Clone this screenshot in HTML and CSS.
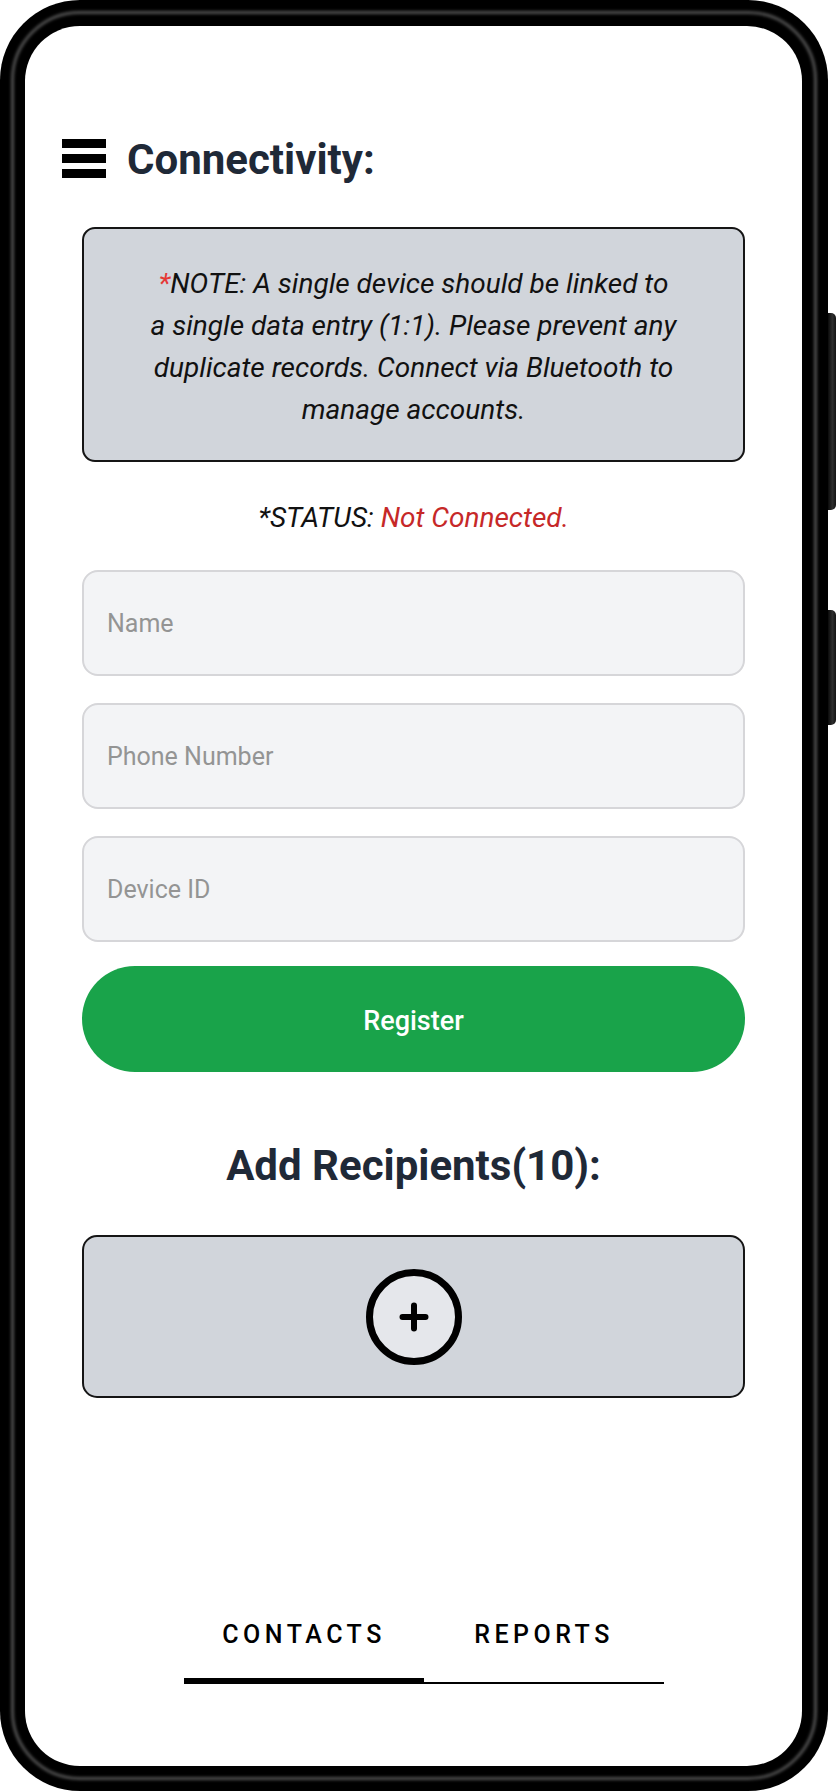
FILE: index.html
```html
<!DOCTYPE html>
<html lang="en">
<head>
<meta charset="utf-8">
<title>Connectivity</title>
<link rel="stylesheet" href="styles.css">
</head>
<body>
<div class="device">
  <div class="frame">
    <div class="screen">
      <header class="header">
        <div class="burger"><span></span><span></span><span></span></div>
        <h1 class="title">Connectivity:</h1>
      </header>
      <main class="content">
        <div class="note">
          <p><span class="req">*</span>NOTE: A single device should be linked to<br>a single data entry (1:1). Please prevent any<br>duplicate records. Connect via Bluetooth to<br>manage accounts.</p>
        </div>
        <p class="status">*STATUS: <span class="bad">Not Connected.</span></p>
        <div class="field"><input type="text" placeholder="Name"></div>
        <div class="field"><input type="text" placeholder="Phone Number"></div>
        <div class="field"><input type="text" placeholder="Device ID"></div>
        <button class="register" type="button">Register</button>
        <h2 class="subtitle">Add Recipients(10):</h2>
        <div class="recipients">
          <div class="add-circle">
            <svg width="32" height="32" viewBox="0 0 32 32"><path d="M16 4.5V27.5M4.5 16H27.5" stroke="#000" stroke-width="6" stroke-linecap="round" fill="none"/></svg>
          </div>
        </div>
      </main>
      <nav class="tabs">
        <div class="tab active">CONTACTS</div>
        <div class="tab">REPORTS</div>
      </nav>
    </div>
  </div>
  <div class="side">
    <div class="sbtn sbtn-long"></div>
    <div class="sbtn sbtn-short"></div>
  </div>
</div>
</body>
</html>
```

FILE: styles.css
```css
* { box-sizing: border-box; }
html, body { margin: 0; padding: 0; background: #ffffff; }
body { font-family: Roboto, "Noto Sans", "Liberation Sans", sans-serif; }

.device { display: flex; align-items: flex-start; width: 838px; height: 1792px; }

.frame {
  position: relative;
  width: 828px;
  height: 1791px;
  background: #000;
  border-radius: 80px;
  padding: 26px 26px 25px 25px;
}
.frame::before {
  content: "";
  position: absolute;
  inset: 11px;
  border-radius: 69px;
  border: 3px solid #505050;
  filter: blur(1.6px);
}

.side { display: flex; flex-direction: column; padding-top: 313px; gap: 100px; }
.sbtn {
  width: 8px;
  border-radius: 0 5px 5px 0;
  background: linear-gradient(90deg, #0a0a0a, #2e2e2e 55%, #141414);
}
.sbtn-long { height: 197px; }
.sbtn-short { height: 115px; }

.screen {
  position: relative;
  height: 100%;
  background: #fff;
  border-radius: 55px;
  display: flex;
  flex-direction: column;
  overflow: hidden;
}

.header {
  display: flex;
  align-items: center;
  gap: 21px;
  padding: 111px 37px 0;
}
.burger { display: flex; flex-direction: column; gap: 6px; width: 44px; }
.burger span { display: block; height: 9px; background: #000; }
.title {
  margin: 0;
  padding-top: 3px;
  font-size: 42px;
  line-height: 39px;
  font-weight: 700;
  color: #1f2937;
}

.content { padding: 0 57px; display: flex; flex-direction: column; }

.note {
  margin-top: 48px;
  height: 235px;
  background: #d1d5db;
  border: 2px solid #151515;
  border-radius: 13px;
  display: flex;
  align-items: center;
  justify-content: center;
}
.note p {
  margin: 0;
  padding-top: 4px;
  font-style: italic;
  font-size: 28px;
  line-height: 42px;
  text-align: center;
  color: #111;
}
.req { color: #e53935; }

.status {
  margin: 41px 0 0;
  font-style: italic;
  font-size: 28px;
  line-height: 30px;
  text-align: center;
  color: #111;
}
.bad { color: #c62828; }

.field { margin-top: 27px; }
.status + .field { margin-top: 37px; }
.field input {
  display: block;
  width: 100%;
  height: 106px;
  border: 2px solid #d6d6d9;
  border-radius: 16px;
  background: #f3f4f6;
  padding: 0 23px;
  font-family: inherit;
  font-size: 25px;
  color: #222;
  outline: none;
}
.field input::placeholder { color: #949494; }

.register {
  margin-top: 24px;
  height: 106px;
  padding-top: 4px;
  border: none;
  border-radius: 53px;
  background: #19a34a;
  color: #fff;
  font-family: inherit;
  font-size: 27px;
  font-weight: 500;
}

.subtitle {
  margin: 73px 0 0;
  font-size: 42px;
  line-height: 42px;
  font-weight: 700;
  text-align: center;
  color: #1f2937;
}

.recipients {
  margin-top: 48px;
  height: 163px;
  background: #d1d5db;
  border: 2px solid #151515;
  border-radius: 15px;
  display: flex;
  align-items: center;
  justify-content: center;
}
.add-circle {
  width: 96px;
  height: 96px;
  border-radius: 50%;
  border: 7px solid #000;
  background: #e5e7eb;
  display: flex;
  align-items: center;
  justify-content: center;
}

.tabs {
  display: flex;
  width: 480px;
  margin: auto 0 82px 159px;
}
.tab {
  flex: 1;
  text-align: center;
  font-size: 25px;
  line-height: 30px;
  font-weight: 500;
  letter-spacing: 4.5px;
  color: #000;
  padding: 0 0 32px;
  border-bottom: 2px solid #000;
}
.tab.active { box-shadow: inset 0 -4px 0 #000; }
```
